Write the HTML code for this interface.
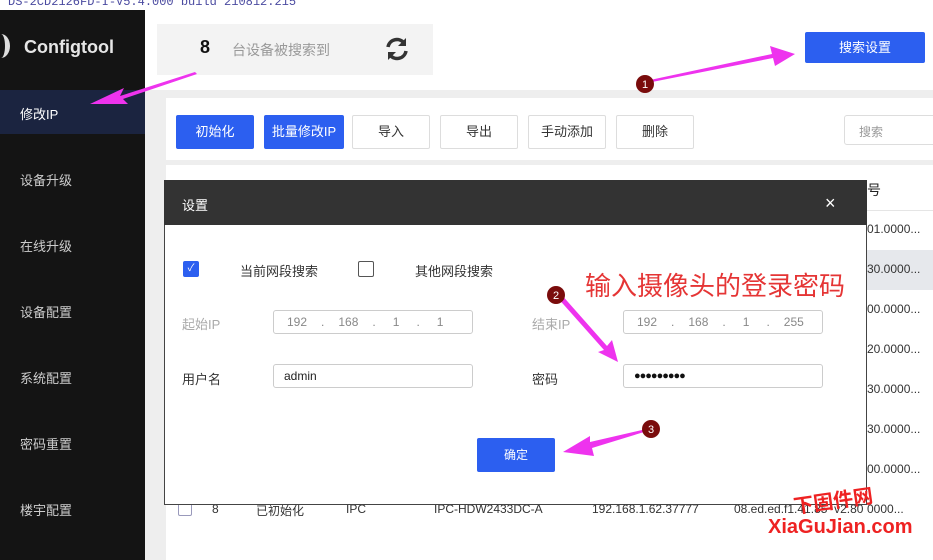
<!DOCTYPE html>
<html><head><meta charset="utf-8"><style>
*{margin:0;padding:0;box-sizing:border-box}
body{width:933px;height:560px;overflow:hidden;position:relative;background:#fff;font-family:"Liberation Sans","Noto Sans CJK SC",sans-serif;font-size:13px;color:#333}
.a{position:absolute}
.btn{position:absolute;top:115px;height:34px;border:1px solid #ddd;background:#fff;text-align:center;line-height:32px;font-size:13px;color:#333;border-radius:2px}
.bb{background:#2c5ff0;color:#fff;border-color:#2c5ff0}
.nav{position:absolute;left:20px;color:#ccc;font-size:13px}
.inp{position:absolute;height:24px;border:1px solid #ccc;border-radius:3px;background:#fff;font-size:12px;line-height:22px;color:#555}
.cell{position:absolute;left:867px;font-size:12px;color:#333}
</style></head><body>
<div class="a" style="left:0;top:0;width:933px;height:10px;background:#fff;font-family:'Liberation Mono',monospace;font-size:12px;color:#4a4aa0;line-height:4px;white-space:nowrap;padding-left:8px">DS-2CD2126FD-I-V5.4.000 build 210812.215</div>
<div class="a" style="left:0;top:10px;width:145px;height:550px;background:#141414"></div>
<div class="a" style="left:-8px;top:34px;width:18px;height:24px;border-radius:50%;border-right:5px solid #ddd"></div>
<div class="a" style="left:24px;top:37px;font-size:18px;font-weight:bold;color:#e6e6e6">Configtool</div>
<div class="a" style="left:0;top:90px;width:145px;height:44px;background:#1b2440"></div>
<div class="nav" style="top:104px;color:#fff">修改IP</div>
<div class="nav" style="top:170px">设备升级</div>
<div class="nav" style="top:236px">在线升级</div>
<div class="nav" style="top:302px">设备配置</div>
<div class="nav" style="top:368px">系统配置</div>
<div class="nav" style="top:434px">密码重置</div>
<div class="nav" style="top:500px">楼宇配置</div>
<div class="a" style="left:145px;top:10px;width:788px;height:550px;background:#fff;border-radius:8px 0 0 0"></div>
<div class="a" style="left:145px;top:90px;width:788px;height:470px;background:#eeeeee"></div>
<div class="a" style="left:157px;top:24px;width:276px;height:51px;background:#f3f3f3"></div>
<div class="a" style="left:200px;top:37px;font-size:18px;font-weight:bold;color:#111">8</div>
<div class="a" style="left:232px;top:40px;font-size:14px;color:#999">台设备被搜索到</div>
<svg class="a" style="left:384px;top:36px" width="26" height="26" viewBox="0 0 26 26"><path d="M4 11a9 9 0 0 1 16-4" stroke="#333" stroke-width="3.5" fill="none"/><path d="M22 2v8h-8z" fill="#333"/><path d="M22 15a9 9 0 0 1-16 4" stroke="#333" stroke-width="3.5" fill="none"/><path d="M4 24v-8h8z" fill="#333"/></svg>
<div class="a" style="left:805px;top:32px;width:120px;height:31px;background:#2c5ff0;color:#fff;text-align:center;line-height:31px;border-radius:2px">搜索设置</div>
<div class="a" style="left:166px;top:98px;width:767px;height:62px;background:#fff"></div>
<div class="btn bb" style="left:176px;width:78px">初始化</div>
<div class="btn bb" style="left:264px;width:80px">批量修改IP</div>
<div class="btn" style="left:352px;width:78px">导入</div>
<div class="btn" style="left:440px;width:78px">导出</div>
<div class="btn" style="left:528px;width:78px">手动添加</div>
<div class="btn" style="left:616px;width:78px">删除</div>
<div class="a" style="left:844px;top:115px;width:100px;height:30px;border:1px solid #ddd;border-radius:3px;padding:7px 14px;color:#999;font-size:12px">搜索</div>
<div class="a" style="left:166px;top:165px;width:767px;height:395px;background:#fff"></div>
<div class="a" style="left:166px;top:210px;width:767px;height:1px;background:#e5e5e5"></div>
<div class="a" style="left:867px;top:180px;font-size:14px;color:#222">号</div>
<div class="a" style="left:166px;top:250px;width:767px;height:40px;background:#e6e8ec"></div>
<div class="cell" style="top:222px">01.0000...</div>
<div class="cell" style="top:262px">30.0000...</div>
<div class="cell" style="top:302px">00.0000...</div>
<div class="cell" style="top:342px">20.0000...</div>
<div class="cell" style="top:382px">30.0000...</div>
<div class="cell" style="top:422px">30.0000...</div>
<div class="cell" style="top:462px">00.0000...</div>
<div class="cell" style="top:502px">0000...</div>
<div class="a" style="left:178px;top:502px;width:14px;height:14px;border:1px solid #99b;border-radius:2px"></div>
<div class="a" style="left:212px;top:502px;font-size:12px">8</div>
<div class="a" style="left:256px;top:502px;font-size:12px">已初始化</div>
<div class="a" style="left:346px;top:502px;font-size:12px">IPC</div>
<div class="a" style="left:434px;top:502px;font-size:12px">IPC-HDW2433DC-A</div>
<div class="a" style="left:592px;top:502px;font-size:12px">192.168.1.62.37777</div>
<div class="a" style="left:734px;top:502px;font-size:12px">08.ed.ed.f1.41.85&nbsp; v2.80</div>
<!-- modal -->
<div class="a" style="left:164px;top:180px;width:703px;height:325px;background:#fff;border:1px solid #444"></div>
<div class="a" style="left:164px;top:180px;width:703px;height:45px;background:#333"></div>
<div class="a" style="left:182px;top:195px;color:#fff;font-size:13px">设置</div>
<div class="a" style="left:825px;top:193px;color:#fff;font-size:18px">×</div>
<div class="a" style="left:183px;top:261px;width:16px;height:16px;background:#2c5ff0;border-radius:2px;color:#fff;font-size:10px;line-height:16px;text-align:center">✓</div>
<div class="a" style="left:240px;top:261px">当前网段搜索</div>
<div class="a" style="left:358px;top:261px;width:16px;height:16px;border:1px solid #555;border-radius:2px"></div>
<div class="a" style="left:415px;top:261px">其他网段搜索</div>
<div class="a" style="left:182px;top:314px;color:#aaa">起始IP</div>
<div class="inp" style="left:273px;top:310px;width:200px;color:#888;word-spacing:0"><span style="margin-left:13px">192</span><span style="margin-left:14px">.</span><span style="margin-left:14px">168</span><span style="margin-left:14px">.</span><span style="margin-left:17px">1</span><span style="margin-left:17px">.</span><span style="margin-left:17px">1</span></div>
<div class="a" style="left:532px;top:314px;color:#aaa">结束IP</div>
<div class="inp" style="left:623px;top:310px;width:200px;color:#888"><span style="margin-left:13px">192</span><span style="margin-left:14px">.</span><span style="margin-left:14px">168</span><span style="margin-left:14px">.</span><span style="margin-left:17px">1</span><span style="margin-left:17px">.</span><span style="margin-left:14px">255</span></div>
<div class="a" style="left:182px;top:369px">用户名</div>
<div class="inp" style="left:273px;top:364px;width:200px;padding-left:10px;color:#222">admin</div>
<div class="a" style="left:532px;top:369px">密码</div>
<div class="inp" style="left:623px;top:364px;width:200px;padding-left:10px;color:#111;font-size:11px;letter-spacing:-1px">●●●●●●●●●</div>
<div class="a" style="left:477px;top:438px;width:78px;height:34px;background:#2c5ff0;color:#fff;text-align:center;line-height:34px;border-radius:2px;font-size:12px">确定</div>
<!-- annotations -->
<div class="a" style="left:585px;top:266px;font-size:26px;color:#e53535">输入摄像头的登录密码</div>
<svg class="a" style="left:0;top:0" width="933" height="560">
<g fill="#ee33ee"><path d="M195 72 L120 96 L124 88 L90 104 L128 104 L123 99 L197 74z"/>
<path d="M650 80 L772 54 L770 46 L795 54 L775 66 L773 58 L652 82z"/>
<path d="M556 296 L604 350 L598 352 L618 362 L612 340 L607 346 L560 293z"/>
<path d="M642 430 L590 442 L590 436 L563 452 L594 456 L592 448 L644 432z"/></g>
<g fill="#7a0c0c"><circle cx="645" cy="84" r="9"/><circle cx="556" cy="295" r="9"/><circle cx="651" cy="429" r="9"/></g>
<g fill="#fff" font-size="11" font-family="Liberation Sans" text-anchor="middle"><text x="645" y="88">1</text><text x="556" y="299">2</text><text x="651" y="433">3</text></g>
</svg>
<div class="a" style="left:793px;top:485px;font-size:20px;color:#e22;font-weight:bold;transform:rotate(-8deg)">下固件网</div>
<div class="a" style="left:768px;top:516px;font-size:20px;color:#e22;font-weight:bold">XiaGuJian.com</div>
</body></html>
